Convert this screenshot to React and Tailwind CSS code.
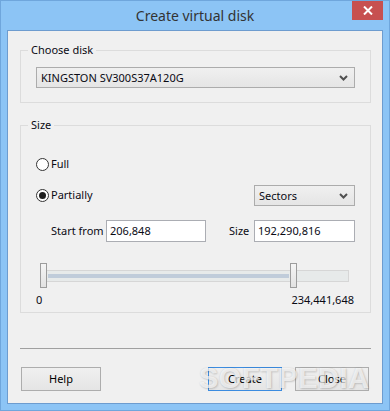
import React from "react";

const font = { fontFamily: '"Noto Sans", "Segoe UI", sans-serif' };

function Chevron() {
  return (
    <svg width="9" height="6" viewBox="0 0 9 6" className="shrink-0">
      <polyline points="1,1 4.5,4.5 8,1" fill="none" stroke="#505050" strokeWidth="2" />
    </svg>
  );
}

function Radio({ checked }) {
  return (
    <div className="w-[13px] h-[13px] rounded-full border border-[#333] bg-white flex items-center justify-center shrink-0">
      {checked && <div className="w-[7px] h-[7px] rounded-full bg-[#1e1e1e]" />}
    </div>
  );
}

function Btn({ children, def, w }) {
  return (
    <div
      className={`h-[24px] flex items-center justify-center border ${
        def ? "border-[#3c8ce0]" : "border-[#adadad]"
      } bg-gradient-to-b from-[#f0f0f0] to-[#e5e5e5] text-[11px] text-black ${w}`}
    >
      {children}
    </div>
  );
}

export default function App() {
  return (
    <div
      className="w-[390px] h-[411px] bg-[#8cc4f5] border border-[#6fa6dc] flex flex-col relative overflow-hidden"
      style={font}
    >
      {/* title bar */}
      <div className="h-[29px] relative flex items-center justify-center shrink-0">
        <span className="text-[14px] text-[#333]">Create virtual disk</span>
        <div className="absolute top-[-1px] right-[6px] w-[31px] h-[20px] bg-[#c75050] flex items-center justify-center">
          <svg width="10" height="9" viewBox="0 0 10 9">
            <path d="M1 0.5 L9 8.5 M9 0.5 L1 8.5" stroke="#fff" strokeWidth="2" />
          </svg>
        </div>
      </div>

      {/* client area */}
      <div className="mx-[6px] mb-[6px] flex-1 border border-[#6d9ccf] bg-[#f0f0f0] flex flex-col text-[11px] text-[#0a0a14] whitespace-nowrap">
        {/* Choose disk group */}
        <div className="relative mt-[19px] ml-[12px] w-[351px] h-[53px] border border-[#dcdcdc] pt-[16px] pl-[15px]">
          <span className="absolute -top-[9px] left-[7px] px-[3px] bg-[#f0f0f0] leading-[16px]">Choose disk</span>
          <div className="w-[319px] h-[21px] border border-[#acacac] bg-gradient-to-b from-[#f0f0f0] to-[#e5e5e5] flex items-center justify-between pl-[4px] pr-[6px]">
            <span className="leading-none">KINGSTON SV300S37A120G</span>
            <Chevron />
          </div>
        </div>

        {/* Size group */}
        <div className="relative mt-[22px] ml-[12px] w-[351px] h-[188px] border border-[#dcdcdc] pl-[15px] pr-[15px] flex flex-col">
          <span className="absolute -top-[9px] left-[7px] px-[3px] bg-[#f0f0f0] leading-[16px]">Size</span>

          <div className="mt-[31px] h-[14px] flex items-center gap-[2px]">
            <Radio />
            <span>Full</span>
          </div>

          <div className="mt-[14px] h-[21px] flex items-center justify-between">
            <div className="flex items-center gap-[2px]">
              <Radio checked />
              <span>Partially</span>
            </div>
            <div className="w-[101px] h-[21px] border border-[#acacac] bg-gradient-to-b from-[#f0f0f0] to-[#e5e5e5] flex items-center justify-between pl-[4px] pr-[6px]">
              <span className="leading-none">Sectors</span>
              <Chevron />
            </div>
          </div>

          <div className="mt-[14px] h-[22px] flex items-center">
            <span className="ml-[15px] w-[55px]">Start from</span>
            <div className="w-[100px] h-[22px] border border-[#abadb3] bg-white flex items-center pl-[3px]">206,848</div>
            <span className="ml-[23px] w-[25px]">Size</span>
            <div className="ml-auto w-[101px] h-[22px] border border-[#abadb3] bg-white flex items-center pl-[3px]">192,290,816</div>
          </div>

          {/* slider */}
          <div className="mt-[21px] h-[25px] relative">
            <div className="absolute left-[10px] top-[7px] w-[303px] h-[12px] border border-[#d6d6d6] bg-[#e7eaea]">
              <div className="ml-[1px] mt-[3px] w-[241px] h-[4px] bg-[#c0ccda]" />
            </div>
            <div className="absolute left-[4px] top-0 w-[7px] h-[25px] border border-[#9c9c9c] bg-gradient-to-b from-[#f5f5f5] to-[#e2e2e2]" />
            <div className="absolute left-[254px] top-0 w-[7px] h-[25px] border border-[#9c9c9c] bg-gradient-to-b from-[#f5f5f5] to-[#e2e2e2]" />
          </div>

          <div className="mt-[4px] flex justify-between leading-[15px]">
            <span>0</span>
            <span className="mr-[1px]">234,441,648</span>
          </div>
        </div>

        {/* separator */}
        <div className="mt-[35px] ml-[12px] w-[351px] h-px bg-[#a0a0a0]" />

        {/* buttons */}
        <div className="mt-[18px] px-[13px] flex items-center">
          <Btn w="w-[80px]">Help</Btn>
          <div className="flex-1" />
          <Btn def w="w-[74px]">Create</Btn>
          <div className="w-[13px]" />
          <Btn w="w-[74px]">Close</Btn>
        </div>
      </div>

      {/* watermark */}
      <div
        className="absolute left-[198px] top-[363px] text-[29px] leading-none font-bold text-white/70 tracking-[0.5px] pointer-events-none"
        style={{ fontFamily: '"Liberation Sans", sans-serif', textShadow: "0 0 2px rgba(0,0,0,0.12), 1px 1px 2px rgba(0,0,0,0.14)" }}
      >
        SOFTPEDIA
      </div>
    </div>
  );
}
